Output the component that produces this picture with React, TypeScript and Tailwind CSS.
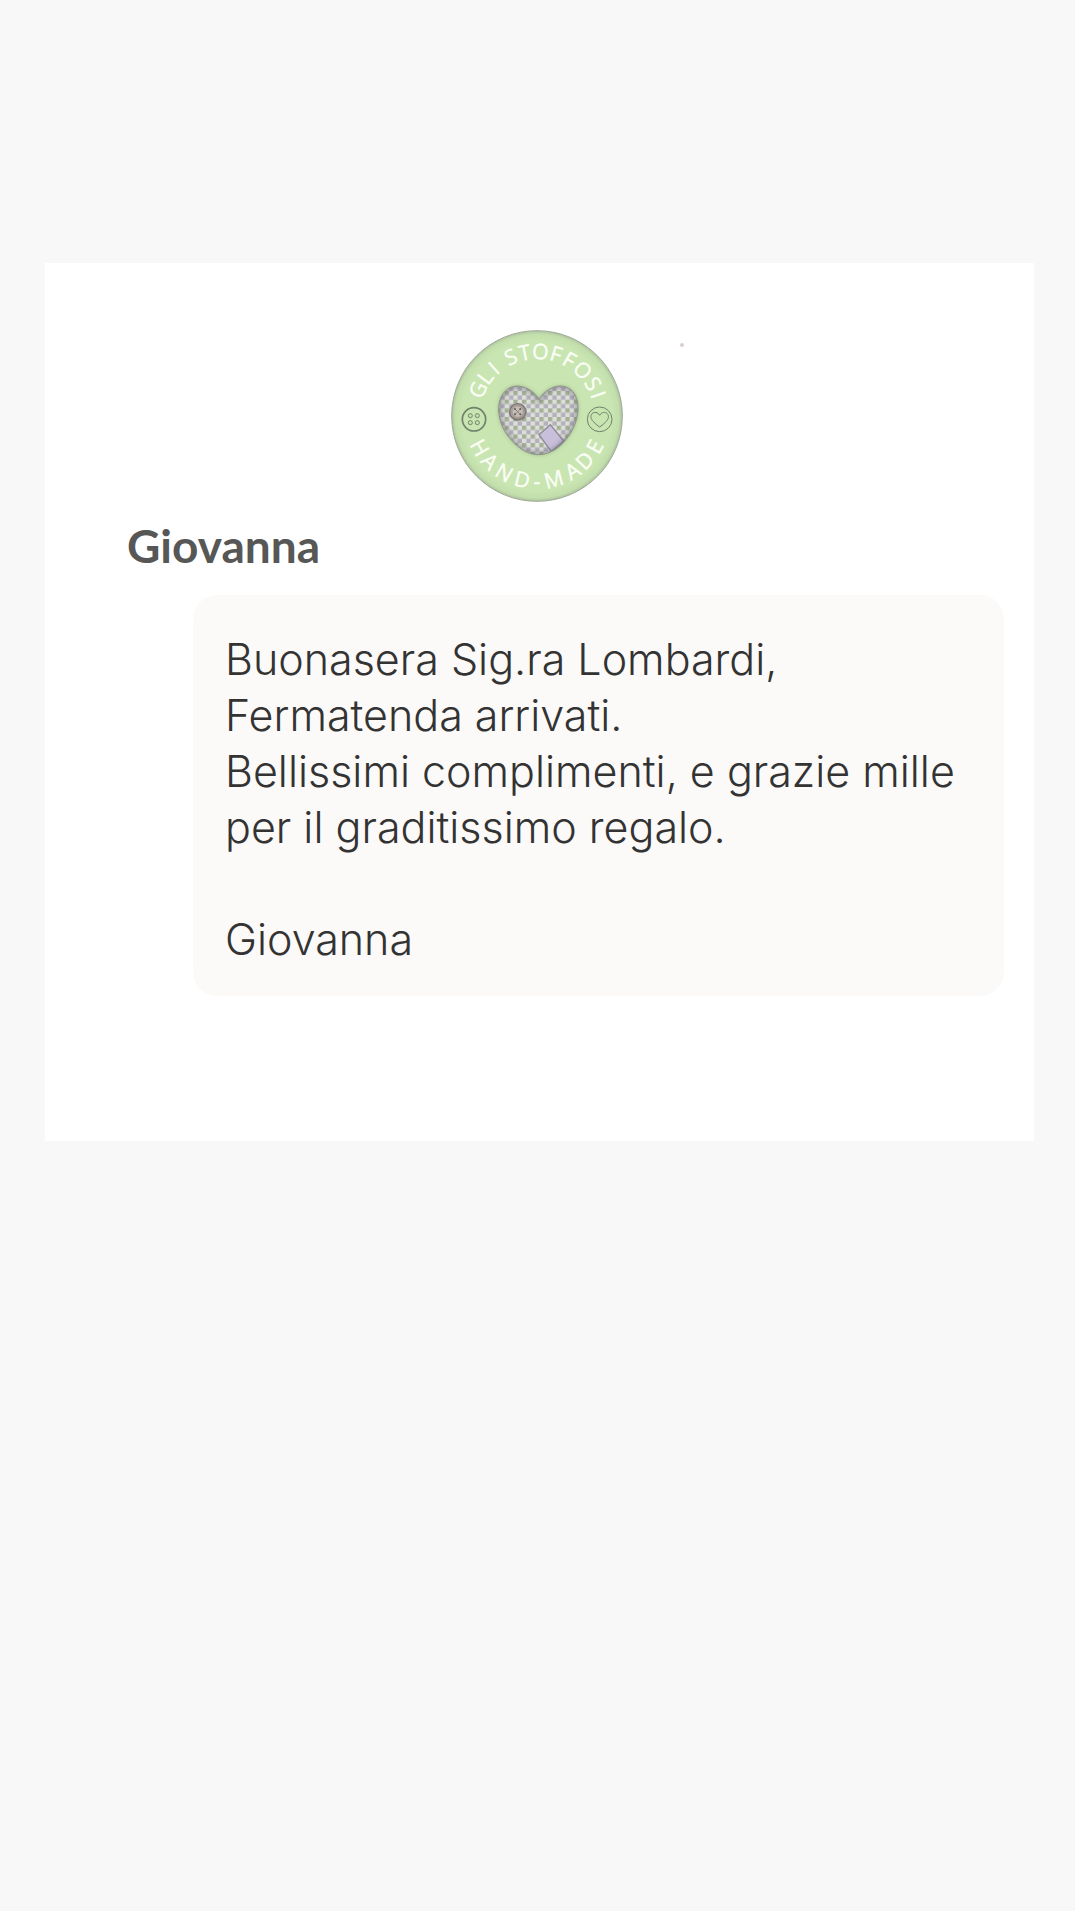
const topLetters = [
  { char: "G", angle: -66 },
  { char: "L", angle: -53 },
  { char: "I", angle: -42 },
  { char: "S", angle: -24 },
  { char: "T", angle: -11 },
  { char: "O", angle: 3 },
  { char: "F", angle: 17 },
  { char: "F", angle: 30 },
  { char: "O", angle: 45 },
  { char: "S", angle: 60 },
  { char: "I", angle: 71 },
];

const bottomLetters = [
  { char: "H", angle: 61 },
  { char: "A", angle: 46 },
  { char: "N", angle: 30 },
  { char: "D", angle: 13 },
  { char: "-", angle: 0 },
  { char: "M", angle: -15 },
  { char: "A", angle: -33 },
  { char: "D", angle: -47 },
  { char: "E", angle: -62 },
];

const heart =
  "M298 237C278 205 235 184 203 207C166 235 172 298 199 338C224 376 260 403 297 403C338 403 372 373 394 336C418 296 426 237 394 208C360 183 318 205 298 237Z";

function Logo() {
  return (
    <svg
      viewBox="34 29 516 516"
      role="img"
      aria-label="Gli Stoffosi hand-made"
      className="size-43 font-['Open_Sans',sans-serif]"
    >
      <defs>
        <radialGradient id="disc">
          <stop offset="0.88" stopColor="#c9e5b1" />
          <stop offset="0.96" stopColor="#c2deac" />
          <stop offset="1" stopColor="#adc39d" />
        </radialGradient>
        <pattern id="gingham" x="221" y="212" width="26" height="26" patternUnits="userSpaceOnUse">
          <rect width="26" height="26" fill="#dededd" />
          <rect width="13" height="13" fill="#a3b195" />
          <rect x="13" y="13" width="13" height="13" fill="#b1b0bb" />
        </pattern>
        <clipPath id="heart-clip">
          <path d={heart} />
        </clipPath>
        <filter id="soft" x="-20%" y="-20%" width="140%" height="140%">
          <feGaussianBlur stdDeviation="6" />
        </filter>
      </defs>

      <circle cx="292" cy="287" r="256" fill="url(#disc)" stroke="#a0aa99" strokeWidth="3" />

      <g fill="#fbfff6" stroke="#fbfff6" strokeWidth="1" fontSize="64" textAnchor="middle">
        {topLetters.map((l, i) => (
          <text key={i} x="292" y="116" transform={`rotate(${l.angle} 292 287)`}>
            {l.char}
          </text>
        ))}
        {bottomLetters.map((l, i) => (
          <text key={i} x="292" y="506" transform={`rotate(${l.angle} 292 287)`}>
            {l.char}
          </text>
        ))}
      </g>

      {/* patchwork heart */}
      <path d={heart} fill="#7f9470" opacity="0.6" filter="url(#soft)" />
      <path d={heart} fill="url(#gingham)" />
      <g clipPath="url(#heart-clip)">
        <path d="M298 343L332 313L372 362L335 394Z" fill="#c8bfda" stroke="#8d8a94" strokeWidth="4" />
        <path d={heart} fill="none" stroke="#6b6b6f" strokeWidth="16" opacity="0.5" filter="url(#soft)" />
      </g>
      <path d={heart} fill="none" stroke="#8f938d" strokeWidth="3" />
      <circle cx="235" cy="276" r="27" fill="#77736d" opacity="0.5" />
      <circle cx="234" cy="274" r="24" fill="#a8a099" stroke="#7d7772" strokeWidth="4" />
      <circle cx="234" cy="274" r="17" fill="#c4bcb5" stroke="#958e88" strokeWidth="2" />
      <path d="M226 266L242 282M242 266L226 282" stroke="#77706c" strokeWidth="2" />
      <g fill="#625d5b">
        <circle cx="226" cy="266" r="3" />
        <circle cx="242" cy="266" r="3" />
        <circle cx="226" cy="282" r="3" />
        <circle cx="242" cy="282" r="3" />
      </g>

      {/* side badges */}
      <g fill="none" stroke="#71806b">
        <circle cx="103" cy="297" r="35" strokeWidth="5" />
        <g strokeWidth="3">
          <circle cx="92" cy="286" r="6" />
          <circle cx="113" cy="286" r="6" />
          <circle cx="92" cy="307" r="6" />
          <circle cx="113" cy="307" r="6" />
        </g>
        <circle cx="480" cy="297" r="37" strokeWidth="3" />
        <path
          d="M480 285C475 275 463 274 457 280C451 287 454 296 460 303C466 310 473 315 480 320C487 315 494 310 500 303C506 296 509 287 503 280C497 274 485 275 480 285Z"
          strokeWidth="3"
        />
      </g>
    </svg>
  );
}

export default function App() {
  return (
    <main className="min-h-screen bg-[#f8f8f8] pt-[263px] pr-[41px] pb-16 pl-[45px]">
      <article className="relative bg-white pt-[67px] pr-[30px] pb-[145px]">
        <span className="absolute top-20 left-[635px] size-1 rounded-full bg-[#dccfcb]" />
        <header>
          <div className="flex justify-center pl-6">
            <Logo />
          </div>
          <h1 className="mt-[18px] pl-[82px] font-['Lato',sans-serif] text-[46px] leading-[52px] font-bold text-[#575756]">
            Giovanna
          </h1>
        </header>
        <blockquote className="mt-[23px] ml-[148px] rounded-3xl bg-[#fbfaf8] pt-9 pb-[29px] pl-8 font-['Inter',sans-serif] text-[43px] leading-[56px] font-[350] text-[#333333]">
          <p>
            Buonasera Sig.ra Lombardi,
            <br />
            Fermatenda arrivati.
            <br />
            Bellissimi complimenti, e grazie mille
            <br />
            per il graditissimo regalo.
          </p>
          <p className="mt-14">Giovanna</p>
        </blockquote>
      </article>
    </main>
  );
}
